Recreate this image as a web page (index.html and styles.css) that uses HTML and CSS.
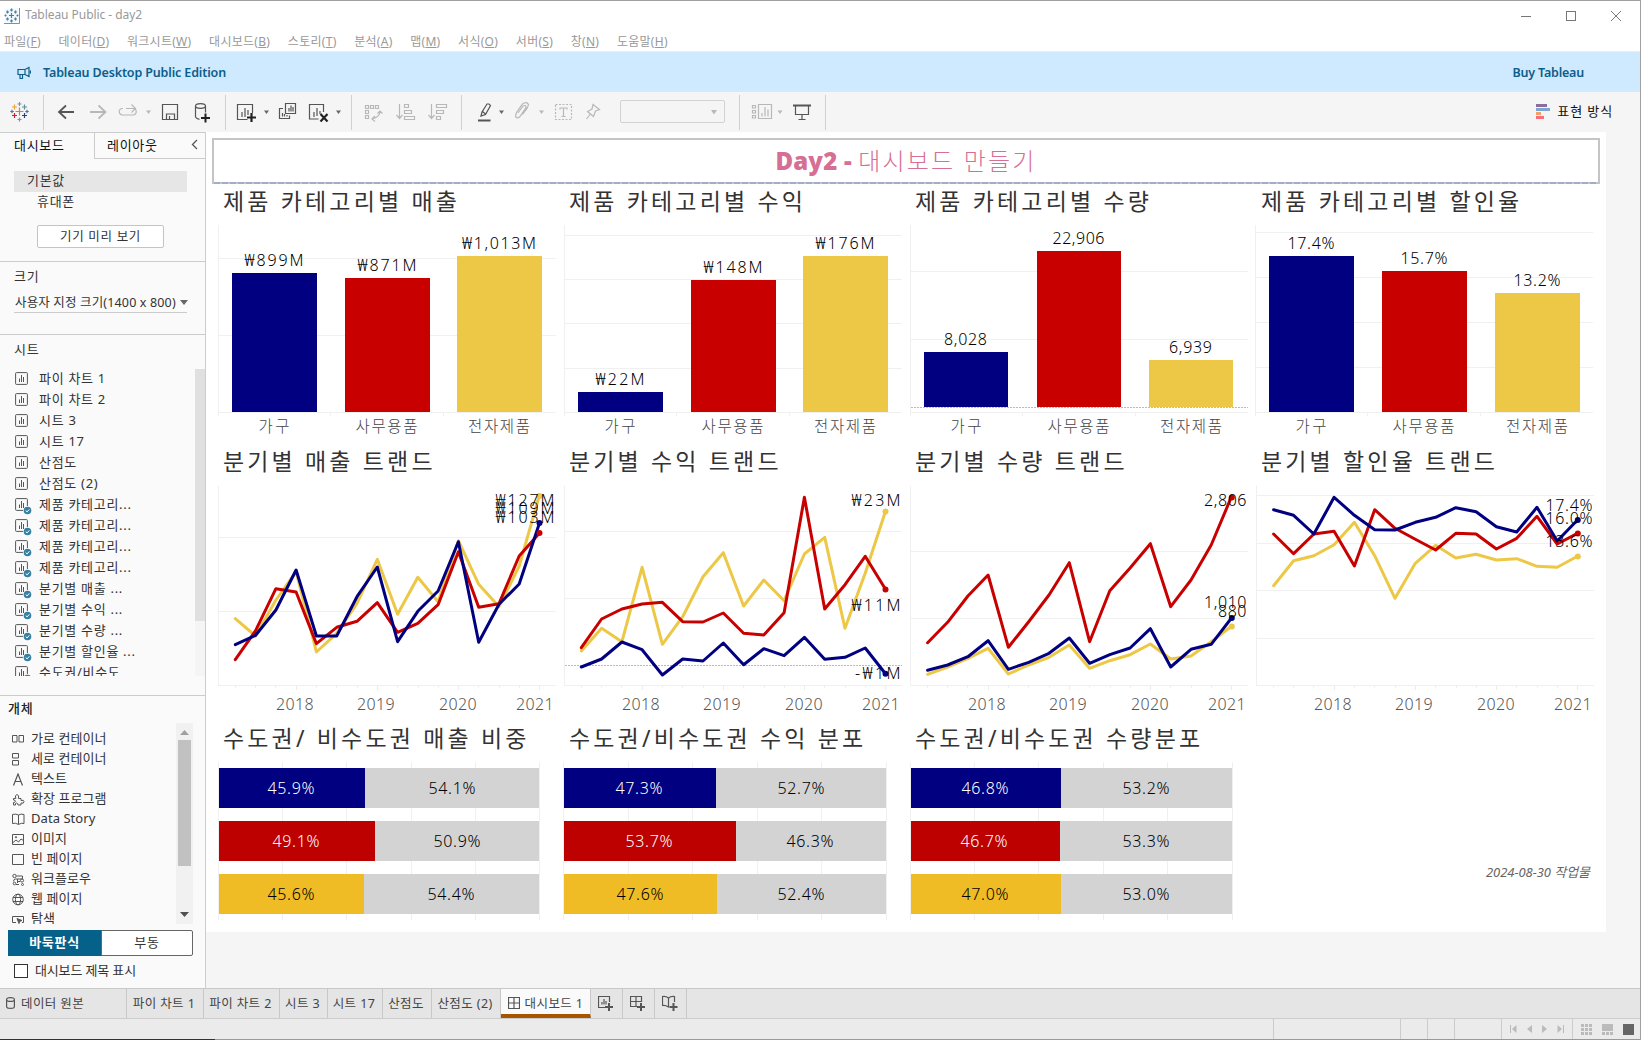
FILE: index.html
```html
<!DOCTYPE html>
<html lang="ko">
<head>
<meta charset="utf-8">
<title>Tableau Public - day2</title>
<link rel="stylesheet" href="styles.css">
</head>
<body>
<svg class="defs" width="0" height="0">
  <symbol id="sheet" viewBox="0 0 15 15"><rect x=".6" y=".6" width="11.8" height="11.8" rx=".8" fill="none" stroke="#555"/><path d="M4.5 6.5v3.5M6.5 3v7M8.5 5v5" stroke="#555" fill="none"/></symbol>
  <symbol id="used" viewBox="0 0 17 17"><path d="M12.4 8V1.4a.8.8 0 0 0-.8-.8H1.4a.8.8 0 0 0-.8.8v10.2a.8.8 0 0 0 .8.8H8" fill="none" stroke="#555"/><path d="M4.5 6.5v3.5M6.5 3v7M8.5 5v5" stroke="#555" fill="none"/><circle cx="12.5" cy="12.5" r="3.8" fill="#3580a3"/><path d="M10.7 12.5l1.4 1.4 2.3-2.6" stroke="#fff" fill="none"/></symbol>
  <symbol id="ticks" viewBox="0 0 346 10"><path d="M21.5 0v1.500M41.5 0v1.500M61.500 0v1.500M102.500 0v1.500M122.500 0v1.500M143.500 0v1.500M183.500 0v1.500M204.500 0v1.500M224.500 0v1.500M264.500 0v1.500M285.500 0v1.500M305.500 0v1.500M82.500 0v4M163.500 0v4M244.500 0v4M325.500 0v4" stroke="#ebebeb" fill="none"/></symbol>
</svg>
<div class="window">
  <header class="titlebar">
    <svg width="16" height="16" viewBox="0 0 16 16"><rect x=".5" y=".5" width="14" height="14" fill="#f3f7fa"/><path d="M7.500 5v5M5 7.500h5M7.500 .5v3M6 2h3M7.500 11.500v3M6 13h3M3.500 2.500v3M2 4h3M11.500 2.500v3M10 4h3M3.500 9.500v3M2 11h3M11.500 9.500v3M10 11h3M1.500 6.500v2M.5 7.500h2M13.500 6.500v2M12.500 7.500h2" stroke="#3d81ad" stroke-width="1.2"/><path d="M15.500 0v15.500H0" fill="none" stroke="#8c8c8c"/></svg>
    <span class="app-title">Tableau Public - day2</span>
    <div class="controls">
      <svg width="12" height="12" viewBox="0 0 12 12"><path d="M1 6.500h10"/></svg>
      <svg width="12" height="12" viewBox="0 0 12 12"><rect x="1.500" y="1.500" width="9" height="9"/></svg>
      <svg width="12" height="12" viewBox="0 0 12 12"><path d="M1 1l10 10M11 1L1 11"/></svg>
    </div>
  </header>
  <nav class="menu">
    <span>파일(<u>F</u>)</span><span>데이터(<u>D</u>)</span><span>워크시트(<u>W</u>)</span><span>대시보드(<u>B</u>)</span><span>스토리(<u>T</u>)</span><span>분석(<u>A</u>)</span><span>맵(<u>M</u>)</span><span>서식(<u>O</u>)</span><span>서버(<u>S</u>)</span><span>창(<u>N</u>)</span><span>도움말(<u>H</u>)</span>
  </nav>
  <div class="banner">
    <svg width="14" height="14" viewBox="0 0 14 14" fill="none" stroke="#0b5f8a" stroke-width="1.200"><path d="M1 3.500h7l4-2v9l-4-2H1zM8 3.500v5M3 8.500v4h2.500v-4M13.500 4.500v3"/></svg>
    <span>Tableau Desktop Public Edition</span>
    <a class="buy">Buy Tableau</a>
  </div>
  <div class="toolbar">
    <div class="group g1">
      <svg width="43" height="40" viewBox="0 92 43 40" fill="none"><path d="M19.500 107.500v8M15.500 111.500h8" stroke="#e8762c"/><path d="M14.500 104.500v5M12 107h5" stroke="#e8a33d"/><path d="M24.500 104.500v5M22 107h5" stroke="#5b8f99"/><path d="M14.500 113v5M12 115.500h5" stroke="#c72035"/><path d="M24.500 113v5M22 115.500h5" stroke="#1f457e"/><path d="M19.500 102v4M17.500 104h4M19.500 117.500v4M17.500 119.500h4" stroke="#7b92b5"/><path d="M12 109.800v3.500M10.300 111.500h3.500M27 109.800v3.500M25.300 111.500h3.500" stroke="#5f6b9a"/></svg>
    </div>
    <div class="group g2">
      <svg width="38" height="40" viewBox="44 92 38 40"><path d="M74 112H59M66 105.500L59 112l7 6.500" stroke-width="1.800"/></svg>
      <svg class="off" width="32" height="40" viewBox="82 92 32 40"><path d="M90 112h15.500M98.500 105.500l7 6.500-7 6.500" stroke-width="1.800"/></svg>
      <svg class="off" width="42" height="40" viewBox="114 92 42 40"><path d="M123 108.500h-.5a3.200 3.200 0 0 0 0 6.500h10.500a3.200 3.200 0 0 0 0-6.500H126M131.500 104.500l4 4-4 4"/><path class="fill" d="M146 110.500h5l-2.500 3.500z"/></svg>
      <svg width="30" height="40" viewBox="156 92 30 40"><path d="M162.500 104.500h15v15h-15zM166.500 119v-5h8v5M169.500 116v3"/></svg>
      <svg width="39" height="40" viewBox="186 92 39 40"><ellipse cx="200.500" cy="106" rx="5" ry="2.300"/><path d="M195.500 106v11q1 2 4 2.300M205.500 106v6.500"/><path d="M205.500 113.500v9M201 118h9" stroke="#222" stroke-width="2"/></svg>
    </div>
    <div class="group g3">
      <svg width="48" height="40" viewBox="226 92 48 40"><path d="M252.500 113v-8.500h-15v15h10M242 112v5M245 108v9M248 110v5"/><path d="M251.500 113v9M247 117.500h9" stroke="#222" stroke-width="2.200"/><path class="fill" d="M264 110.500h5l-2.500 3.500z"/></svg>
      <svg width="28" height="40" viewBox="274 92 28 40"><path d="M285.500 103.500h10v10h-10zM289 108v3.500M291 105.500v6M293 107v4.500M283 108.500h-3.500v10h10v-3M282.500 113v3.500M284.500 114v2.500M287 115v1.500"/></svg>
      <svg width="49" height="40" viewBox="302 92 49 40"><path d="M323.500 112v-7.500h-14v14.500h9M314 112v5M317 108v8M320 111v3"/><path d="M320.500 114l7 7.500M327.500 114l-7 7.500" stroke="#222" stroke-width="2.200"/><path class="fill" d="M336 110.500h5l-2.500 3.500z"/></svg>
    </div>
    <div class="group g4 off">
      <svg width="37" height="40" viewBox="352 92 37 40"><path d="M365.500 105.500h3v3h-3zM370.500 105.500h3v3h-3zM375.500 105.500h3v3h-3zM365.500 110.500h3v3h-3zM365.500 115.500h3v3h-3zM380 111q0 6-8 8M377.500 113.500l2.500-2.500 2.500 2.500M375 116l-3 3 3 2.500"/></svg>
      <svg width="32" height="40" viewBox="389 92 32 40"><path d="M399.500 104v14M396.500 115l3 3.500 3-3.500M404.500 104.500h4v3h-4zM404.500 110.500h7v3h-7zM404.500 116.500h10v3h-10z"/></svg>
      <svg width="40" height="40" viewBox="421 92 40 40"><path d="M431.500 104v14M428.500 115l3 3.500 3-3.500M436.500 104.500h10v3h-10zM436.500 110.500h7v3h-7zM436.500 116.500h4v3h-4z"/></svg>
    </div>
    <div class="group g5">
      <svg width="46" height="40" viewBox="462 92 46 40"><path d="M481 116l1-4 5-8h2l1.500 1.500-5 9-4.500 1.500zM482.500 111.500l3 2.500"/><path d="M478 120.500h12.500" stroke-width="2"/><path class="fill" d="M499 110.500h5l-2.500 3.500z"/></svg>
      <svg class="off" width="40" height="40" viewBox="508 92 40 40"><path d="M518 113l5-7q3-1.500 3 1.500l-6 9q-3.500 3-4.500-.5l1-3.500 6-8.500q4-3 6 .5-.5 3-3 6l-3 4"/><path class="fill" d="M539 110.500h5l-2.500 3.500z"/></svg>
      <svg class="off" width="31" height="40" viewBox="548 92 31 40"><rect x="555.500" y="104.500" width="16" height="15" stroke-dasharray="2 1.500"/><path d="M560 109.500v-1.500h7v1.500M563.500 108v8M561.500 116.500h4"/></svg>
      <svg class="off" width="41" height="40" viewBox="579 92 41 40"><path d="M593 104.500l6.500 5-4 1.500-2 5.500-6-5 4.500-2.500zM590.500 114l-4 5"/></svg>
      <span class="fit"><svg class="off" width="8" height="6" viewBox="0 0 8 6"><path class="fill" d="M1 1h6L4 5.500z"/></svg></span>
    </div>
    <div class="group g6">
      <svg class="off" width="45" height="40" viewBox="740 92 45 40"><path d="M752.500 105.500h3v2.500h-3zM752.500 110.500h3v2.500h-3zM752.500 115.500h3v2.500h-3zM758.500 104.500h13v14h-13zM762 113v3.500M765 107v9.500M768 109.500v7"/><path class="fill" d="M777.500 110.500h5l-2.500 3.500z"/></svg>
      <svg width="39" height="40" viewBox="785 92 39 40"><path d="M795.500 106v8.500h13V106M802 114.500v5M798.500 119.500h7"/><path d="M793 105.500h18" stroke-width="2"/></svg>
    </div>
    <div class="showme"><svg width="14" height="16" viewBox="0 0 14 16"><path fill="#8a6d9c" d="M0 0h11v3H0z"/><path fill="#7ea4d0" d="M0 4h14v3H0z"/><path fill="#f3a06b" d="M0 8h5v3H0z"/><path fill="#fa6e7a" d="M0 12h8v3H0z"/></svg><span>표현 방식</span></div>
  </div>
  <main class="main">
    <aside class="side">
      <div class="side-tabs"><span class="st-a">대시보드</span><span class="st-b">레이아웃<svg width="7" height="11" viewBox="0 0 7 11"><path d="M6 1L1.500 5.500 6 10" fill="none" stroke="#555" stroke-width="1.300"/></svg></span></div>
      <div class="devices">
        <div class="dev sel">기본값</div><div class="dev sub">휴대폰</div>
        <div class="preview">기기 미리 보기</div>
      </div>
      <div class="size"><h3>크기</h3><div class="select"><span>사용자 지정 크기(1400 x 800)</span><svg width="8" height="5" viewBox="0 0 8 5"><path d="M0 0h8L4 5z" fill="#666"/></svg></div></div>
      <div class="sheets"><h3>시트</h3>
        <div class="scroll">
          <ul>
            <li><svg><use href="#sheet" width="15" height="15"/></svg>파이 차트 1</li>
            <li><svg><use href="#sheet" width="15" height="15"/></svg>파이 차트 2</li>
            <li><svg><use href="#sheet" width="15" height="15"/></svg>시트 3</li>
            <li><svg><use href="#sheet" width="15" height="15"/></svg>시트 17</li>
            <li><svg><use href="#sheet" width="15" height="15"/></svg>산점도</li>
            <li><svg><use href="#sheet" width="15" height="15"/></svg>산점도 (2)</li>
            <li><svg><use href="#used" width="17" height="17"/></svg>제품 카테고리...</li>
            <li><svg><use href="#used" width="17" height="17"/></svg>제품 카테고리...</li>
            <li><svg><use href="#used" width="17" height="17"/></svg>제품 카테고리...</li>
            <li><svg><use href="#used" width="17" height="17"/></svg>제품 카테고리...</li>
            <li><svg><use href="#used" width="17" height="17"/></svg>분기별 매출 ...</li>
            <li><svg><use href="#used" width="17" height="17"/></svg>분기별 수익 ...</li>
            <li><svg><use href="#used" width="17" height="17"/></svg>분기별 수량 ...</li>
            <li><svg><use href="#used" width="17" height="17"/></svg>분기별 할인율 ...</li>
            <li><svg><use href="#used" width="17" height="17"/></svg>수도권/비수도</li>
          </ul>
          <div class="track"><div class="thumb"></div></div>
        </div>
      </div>
      <div class="objects"><h3>개체</h3>
        <div class="scroll">
          <ul>
            <li><svg viewBox="0 0 13 13"><path d="M.5 2.500h4.500v6.500H.5zM7 2.500h4.500v6.500H7z" /></svg>가로 컨테이너</li>
            <li><svg viewBox="0 0 13 13"><path d="M.5 .5h6v4.500h-6zM.5 7.500h6v4.500h-6z"/></svg>세로 컨테이너</li>
            <li><svg viewBox="0 0 13 13"><path d="M1.500 12.500L6 1l4.500 11.500M3 8.500h6" stroke-width="1.200"/></svg>텍스트</li>
            <li><svg viewBox="0 0 13 13"><path d="M1.500 5.500h2.300q-1.300-3.500 1.200-4 2.500.5 1.500 4h2.500v2q3-1 3 1.200t-3 1.300v2H6q0-2-1.500-2t-1 2h-2v-2.500q2 0 2-1.200t-2-1.300z"/></svg>확장 프로그램</li>
            <li><svg viewBox="0 0 13 13"><path d="M6.500 2Q4 .5 .5 1.500v9q3-1 6 1 3-2 5.500-1v-9Q9 .5 6.500 2v9"/></svg>Data Story</li>
            <li><svg viewBox="0 0 13 13"><path d="M.5 1.500h11v10H.5zM.5 10l3.500-3 2.500 2L9 6l2.500 1.500"/><circle cx="4" cy="4.200" r=".7"/></svg>이미지</li>
            <li><svg viewBox="0 0 13 13"><path d="M.5 1.500h11v10H.5z"/></svg>빈 페이지</li>
            <li><svg viewBox="0 0 13 13"><circle cx="2.500" cy="3" r="1.700"/><path d="M4.500 3h6v3h-7q-2 0-2 2.500M5 8.500h3M4 11.500h3M5.500 6v4"/><circle cx="10" cy="7.500" r="1.600"/><circle cx="2.500" cy="10.500" r="1.300"/><circle cx="10.500" cy="11.500" r="1"/></svg>워크플로우</li>
            <li><svg viewBox="0 0 13 13"><circle cx="6" cy="6.500" r="5.300"/><ellipse cx="6" cy="6.500" rx="2.600" ry="5.300"/><path d="M1 4.500h10M1 8.500h10"/></svg>웹 페이지</li>
            <li><svg viewBox="0 0 13 13"><path d="M4 9.500H.5v-6h11v6H10"/><path d="M5 5.500l5 2-2.200.8L7 10.500z" fill="#555"/></svg>탐색</li>
          </ul>
          <div class="track"><svg width="9" height="5" viewBox="0 0 9 5"><path d="M0 5h9L4.500 0z" fill="#a0a0a0"/></svg><div class="thumb"></div><svg width="9" height="5" viewBox="0 0 9 5"><path d="M0 0h9L4.500 5z" fill="#505050"/></svg></div>
        </div>
        <div class="toggle"><span class="on">바둑판식</span><span>부동</span></div>
        <label class="check"><i></i>대시보드 제목 표시</label>
      </div>
    </aside>
    <section class="canvas">
      <div class="dashboard">
        <h1><b>Day2 - </b>대시보드 만들기</h1>
        <div class="grid">
          <article><h2>제품 카테고리별 매출</h2>
            <svg viewBox="0 222 346 222" width="346" height="222">
              <path class="gl" d="M4 258.500h338M4 335.500h338M4.500 225v191M4 412.500h338M116.500 413v3M229.500 413v3"/>
              <path class="n" d="M18 273h85v139h-85z"/><path class="r" d="M131 278h85v134h-85z"/><path class="y" d="M243 256h85v156h-85z"/>
              <g class="val"><text x="60" y="266" textLength="59">₩899M</text><text x="173" y="271" textLength="59">₩871M</text><text x="285" y="249" textLength="74">₩1,013M</text></g>
              <g class="cat"><text x="60" y="432" textLength="31">가구</text><text x="172.500" y="432" textLength="62">사무용품</text><text x="285" y="432" textLength="62">전자제품</text></g>
            </svg></article>
          <article><h2>제품 카테고리별 수익</h2>
            <svg viewBox="0 222 346 222" width="346" height="222">
              <path class="gl" d="M4 235.500h338M4 279.500h338M4 323.500h338M4 368.500h338M4.500 225v191M4 412.500h338M116.500 413v3M229.500 413v3"/>
              <path class="n" d="M18 392h85v20h-85z"/><path class="r" d="M131 280h85v132h-85z"/><path class="y" d="M243 256h85v156h-85z"/>
              <g class="val"><text x="60" y="385" textLength="49">₩22M</text><text x="173" y="273" textLength="59">₩148M</text><text x="285" y="249" textLength="59">₩176M</text></g>
              <g class="cat"><text x="60" y="432" textLength="31">가구</text><text x="172.500" y="432" textLength="62">사무용품</text><text x="285" y="432" textLength="62">전자제품</text></g>
            </svg></article>
          <article><h2>제품 카테고리별 수량</h2>
            <svg viewBox="0 222 346 222" width="346" height="222">
              <path class="gl" d="M4 271.500h338M4 339.500h338M4.500 225v191M4 412.500h338M116.500 413v3M229.500 413v3"/><path class="zero" d="M5 407.500h337"/>
              <path class="n" d="M18 352h84v55h-84z"/><path class="r" d="M131 251h84v156h-84z"/><path class="y" d="M243 360h84v47h-84z"/>
              <g class="val"><text x="59.500" y="345" textLength="43">8,028</text><text x="172.500" y="244" textLength="52">22,906</text><text x="284.500" y="353" textLength="43">6,939</text></g>
              <g class="cat"><text x="60" y="432" textLength="31">가구</text><text x="172.500" y="432" textLength="62">사무용품</text><text x="285" y="432" textLength="62">전자제품</text></g>
            </svg></article>
          <article><h2>제품 카테고리별 할인율</h2>
            <svg viewBox="1 222 346 222" width="346" height="222">
              <path class="gl" d="M4 232.500h338M4 277.500h338M4 322.500h338M4 367.500h338M4.500 225v191M4 412.500h338M116.500 413v3M229.500 413v3"/>
              <path class="n" d="M18 256h85v156h-85z"/><path class="r" d="M131 271h85v141h-85z"/><path class="y" d="M244 293h85v119h-85z"/>
              <g class="val"><text x="60" y="249" textLength="47">17.4%</text><text x="173" y="264" textLength="47">15.7%</text><text x="286" y="286" textLength="47">13.2%</text></g>
              <g class="cat"><text x="60" y="432" textLength="31">가구</text><text x="172.500" y="432" textLength="62">사무용품</text><text x="286" y="432" textLength="62">전자제품</text></g>
            </svg></article>

          <article><h2>분기별 매출 트랜드</h2>
            <svg viewBox="0 482 346 239" width="346" height="239">
              <path class="gl" d="M4 537.500h338M4 611.500h338M4.500 486v200M4 685.500h338"/><use href="#ticks" y="686" width="346" height="10"/>
              <polyline class="ly" points="21.300,618.700 41.600,636 61.900,600 82.100,571.700 102.400,652 122.700,633.300 143,603.300 163.300,559.300 183.600,614.300 203.800,577.300 224.100,601.700 244.400,540.700 264.700,584.300 285,606.700 305.200,566 325.500,495"/>
              <polyline class="lr" points="21.300,659.700 41.600,630.700 61.900,588.700 82.100,592 102.400,643.700 122.700,627.300 143,621.300 163.300,602.700 183.600,632.300 203.800,623.300 224.100,604.700 244.400,551.700 264.700,607.300 285,603.700 305.200,556 325.500,533"/>
              <polyline class="ln" points="21.300,644.700 41.600,635.300 61.900,610 82.100,570 102.400,636 122.700,636 143,596.700 163.300,567 183.600,641.700 203.800,611.300 224.100,591 244.400,541.700 264.700,642.300 285,604.300 305.200,584 325.500,523"/>
              <circle class="y" cx="325.500" cy="496" r="3"/><circle class="r" cx="325.500" cy="533" r="3"/><circle class="n" cx="325.500" cy="523" r="3"/>
              <g class="end"><text x="281.500" y="506" textLength="59">₩127M</text><text x="281.500" y="514" textLength="59">₩109M</text><text x="281.500" y="523" textLength="59">₩103M</text></g>
              <g class="yr"><text x="81" y="710">2018</text><text x="162" y="710">2019</text><text x="244" y="710">2020</text><text x="321" y="710">2021</text></g>
            </svg></article>
          <article><h2>분기별 수익 트랜드</h2>
            <svg viewBox="0 482 346 239" width="346" height="239">
              <path class="gl" d="M4 531.500h338M4 598.500h338M4.500 486v200M4 685.500h338"/><path class="zero" d="M5 665.500h337"/><use href="#ticks" y="686" width="346" height="10"/>
              <polyline class="ly" points="21.300,651 41.600,628.300 61.900,641.700 82.100,567.300 102.400,644.300 122.700,616.700 143,576.700 163.300,552.700 183.600,606 203.800,580 224.100,600.700 244.400,554 264.700,537.300 285,628.300 305.200,573.300 325.500,511.300"/>
              <polyline class="lr" points="21.300,647.700 41.600,619 61.900,609 82.100,604 102.400,602.300 122.700,621.700 143,622 163.300,613 183.600,633.300 203.800,635 224.100,612.700 244.400,497.300 264.700,609 285,584.700 305.200,556.300 325.500,589.300"/>
              <polyline class="ln" points="21.300,667 41.600,659 61.900,642 82.100,649.700 102.400,675 122.700,659 143,661 163.300,643 183.600,664.700 203.800,648.700 224.100,655.700 244.400,637.300 264.700,659.300 285,657.300 305.200,648 325.500,673.700"/>
              <circle class="y" cx="325.500" cy="511.500" r="3"/><circle class="r" cx="325.500" cy="589.500" r="3"/><circle class="n" cx="325.500" cy="673.700" r="3"/>
              <g class="end"><text x="291.500" y="506" textLength="49">₩23M</text><text x="291.500" y="611" textLength="49">₩11M</text><text x="295" y="679" textLength="45.500">-₩1M</text></g>
              <g class="yr"><text x="81" y="710">2018</text><text x="162" y="710">2019</text><text x="244" y="710">2020</text><text x="321" y="710">2021</text></g>
            </svg></article>
          <article><h2>분기별 수량 트랜드</h2>
            <svg viewBox="0 482 346 239" width="346" height="239">
              <path class="gl" d="M4 551.500h338M4 618.500h338M4.500 486v200M4 685.500h338"/><use href="#ticks" y="686" width="346" height="10"/>
              <polyline class="ly" points="21.600,674.300 41.600,667 61.900,658.300 82.100,648.300 102.400,674 122.700,665 143,657.300 163.300,645 183.600,668.300 203.800,660.700 224.100,654.700 244.400,644 264.700,659 285,656 305.200,641.700 325.500,626.300"/>
              <polyline class="lr" points="21.600,642.700 41.600,622.300 61.900,596 82.100,575 102.400,647.300 122.700,621.700 143,595 163.300,562.700 183.600,641.700 203.800,590.700 224.100,568 244.400,543.700 264.700,606.700 285,580 305.200,545 325.500,496.700"/>
              <polyline class="ln" points="21.600,670.300 41.600,665 61.900,656.700 82.100,640.700 102.400,669.300 122.700,662.300 143,653.300 163.300,638 183.600,663.300 203.800,654.700 224.100,648 244.400,628.700 264.700,667 285,649.300 305.200,644.300 325.500,618"/>
              <circle class="y" cx="325.800" cy="626.500" r="3"/><circle class="r" cx="325.800" cy="497.500" r="3"/><circle class="n" cx="325.800" cy="618" r="3"/>
              <g class="end"><text x="298" y="506" textLength="42.500">2,806</text><text x="298" y="608" textLength="42.500">1,010</text><text x="312" y="617" textLength="28.500">880</text></g>
              <g class="yr"><text x="81" y="710">2018</text><text x="162" y="710">2019</text><text x="244" y="710">2020</text><text x="321" y="710">2021</text></g>
            </svg></article>
          <article><h2>분기별 할인율 트랜드</h2>
            <svg viewBox="0 482 346 239" width="346" height="239">
              <path class="gl" d="M4 495.500h338M4 543.500h338M4 590.500h338M4 638.500h338M4.500 486v200M4 685.500h338"/><use href="#ticks" y="686" width="346" height="10"/>
              <polyline class="ly" points="21.600,585.700 41.600,560.700 61.900,555.700 82.100,544.700 102.400,522.300 122.700,555.700 143,598.300 163.300,563.300 183.600,545.300 203.800,558 224.100,554.300 244.400,560 264.700,558.700 285,566.300 305.200,567.300 325.500,556.300"/>
              <polyline class="lr" points="21.600,534 41.600,553.700 61.900,534 82.100,531.300 102.400,566 122.700,509.700 143,528.300 163.300,539.300 183.600,550 203.800,533.300 224.100,534 244.400,549 264.700,538.300 285,516.300 305.200,544 325.500,533.300"/>
              <polyline class="ln" points="21.600,509.700 41.600,515.300 61.900,534 82.100,497.300 102.400,515.300 122.700,529.700 143,530 163.300,522.300 183.600,517.300 203.800,507.700 224.100,511.700 244.400,526.700 264.700,532 285,507.300 305.200,541 325.500,520"/>
              <circle class="y" cx="325.800" cy="556.500" r="3"/><circle class="r" cx="325.800" cy="533.500" r="3"/><circle class="n" cx="325.800" cy="520" r="3"/>
              <g class="end"><text x="293.500" y="511" textLength="47">17.4%</text><text x="293.500" y="524" textLength="47">16.0%</text><text x="293.500" y="547" textLength="47">13.6%</text></g>
              <g class="yr"><text x="81" y="710">2018</text><text x="162" y="710">2019</text><text x="244" y="710">2020</text><text x="321" y="710">2021</text></g>
            </svg></article>

          <article><h2>수도권/ 비수도권 매출 비중</h2>
            <svg viewBox="0 759 346 173" width="346" height="173">
              <path class="gl" d="M4.500 762v158M68.500 762v158M132.500 762v158M197.500 762v158M261.500 762v158M325.500 762v158"/>
              <path fill="#d3d3d3" d="M5 768h320v40H5zM5 821h320v40H5zM5 874h320v40H5z"/>
              <path class="n" d="M5 768h146v40H5z"/><path class="r2" d="M5 821h156v40H5z"/><path class="y2" d="M5 874h145v40H5z"/>
              <g class="val w"><text x="77" y="794" textLength="47">45.9%</text><text x="82" y="847" textLength="47">49.1%</text></g>
              <g class="val"><text x="77" y="900" textLength="47">45.6%</text><text x="238" y="794" textLength="47">54.1%</text><text x="243" y="847" textLength="47">50.9%</text><text x="237" y="900" textLength="47">54.4%</text></g>
            </svg></article>
          <article><h2>수도권/비수도권 수익 분포</h2>
            <svg viewBox="0 759 346 173" width="346" height="173">
              <path class="gl" d="M3.500 762v158M68.500 762v158M132.500 762v158M197.500 762v158M261.500 762v158M326.500 762v158"/>
              <path fill="#d3d3d3" d="M4 768h322v40H4zM4 821h322v40H4zM4 874h322v40H4z"/>
              <path class="n" d="M4 768h152v40H4z"/><path class="r2" d="M4 821h172v40H4z"/><path class="y2" d="M4 874h153v40H4z"/>
              <g class="val w"><text x="79" y="794" textLength="47">47.3%</text><text x="89" y="847" textLength="47">53.7%</text></g>
              <g class="val"><text x="80" y="900" textLength="47">47.6%</text><text x="241" y="794" textLength="47">52.7%</text><text x="250" y="847" textLength="47">46.3%</text><text x="241" y="900" textLength="47">52.4%</text></g>
            </svg></article>
          <article><h2>수도권/비수도권 수량분포</h2>
            <svg viewBox="0 759 346 173" width="346" height="173">
              <path class="gl" d="M4.500 762v158M68.500 762v158M132.500 762v158M197.500 762v158M261.500 762v158M326.500 762v158"/>
              <path fill="#d3d3d3" d="M5 768h321v40H5zM5 821h321v40H5zM5 874h321v40H5z"/>
              <path class="n" d="M5 768h150v40H5z"/><path class="r2" d="M5 821h149v40H5z"/><path class="y2" d="M5 874h150v40H5z"/>
              <g class="val w"><text x="79" y="794" textLength="47">46.8%</text><text x="78" y="847" textLength="47">46.7%</text></g>
              <g class="val"><text x="79" y="900" textLength="47">47.0%</text><text x="240" y="794" textLength="47">53.2%</text><text x="240" y="847" textLength="47">53.3%</text><text x="240" y="900" textLength="47">53.0%</text></g>
            </svg></article>
          <article class="note"><p>2024-08-30 작업물</p></article>
        </div>
      </div>
    </section>
  </main>
  <nav class="tabs">
    <span class="src"><svg width="9" height="12" viewBox="0 0 9 12"><path d="M.6 2.500v7Q.6 11.400 4.500 11.400T8.400 9.500v-7Q8.400.6 4.500.6T.6 2.500 4.500 4.400 8.400 2.500"/></svg>데이터 원본</span>
    <span>파이 차트 1</span><span>파이 차트 2</span><span>시트 3</span><span>시트 17</span><span>산점도</span><span>산점도 (2)</span>
    <span class="active"><svg width="12" height="12" viewBox="0 0 12 12"><path d="M.5 .5h11v11H.5zM6 .5v11M.5 6h11"/></svg>대시보드 1</span>
    <span><svg width="16" height="16" viewBox="0 0 16 16"><path d="M11.500 7V1.500H.5v11H7M4 7v2.500M6 4v5.500M8 6v3.500"/><path d="M11 8v8M7 12h8" stroke-width="2"/></svg></span>
    <span><svg width="16" height="16" viewBox="0 0 16 16"><path d="M11.500 7V1.500H.5v10H7M6 1.500v10M.5 6.500h11"/><path d="M11 8v8M7 12h8" stroke-width="2"/></svg></span>
    <span><svg width="16" height="16" viewBox="0 0 16 16"><path d="M12.500 7V1.500Q9 1 6.500 3 4 1 .5 1.500v9q3-.5 6 1.500V3"/><path d="M11.500 8v8M7.500 12h8" stroke-width="2"/></svg></span>
    <span class="rest"></span>
  </nav>
  <footer class="status">
    <span></span><span></span><span></span><span></span><span></span>
    <span class="nav"><svg width="7" height="8" viewBox="0 0 7 8"><path d="M0 0h1v8H0zM6.500 0v8L2 4z"/></svg><svg width="5" height="8" viewBox="0 0 5 8"><path d="M5 0v8L0 4z"/></svg><svg width="5" height="8" viewBox="0 0 5 8"><path d="M0 0v8l5-4z"/></svg><svg width="7" height="8" viewBox="0 0 7 8"><path d="M6 0h1v8H6zM.5 0v8L5 4z"/></svg></span>
    <span class="views"><svg width="11" height="11" viewBox="0 0 11 11"><path d="M0 0h3v3H0zM4 0h3v3H4zM8 0h3v3H8zM0 4h3v3H0zM4 4h3v3H4zM8 4h3v3H8zM0 8h3v3H0zM4 8h3v3H4zM8 8h3v3H8z"/></svg><svg width="11" height="11" viewBox="0 0 11 11"><path d="M0 0h11v7H0zM0 8h3v3H0zM4 8h3v3H4zM8 8h3v3H8z"/></svg><svg width="11" height="11" viewBox="0 0 11 11"><path fill="#666" d="M0 0h11v11H0z"/></svg></span>
  </footer>
  <div class="edge"></div>
</div>
</body>
</html>
```
FILE: styles.css
```css
* { box-sizing: border-box; }
body { margin: 0; font: 13px/1.2 "Noto Sans", "Noto Sans CJK KR", sans-serif; color: #333; background: #fff; }
svg { display: block; flex: none; }
.defs { position: absolute; }
h1, h2, h3, p, ul { margin: 0; padding: 0; font-weight: 400; list-style: none; }
.window { width: 1641px; height: 1040px; display: flex; flex-direction: column; border-top: 1px solid #a3a1a0; border-right: 1px solid #a0a0a0; overflow: hidden; }

.titlebar { height: 29px; flex: none; display: flex; align-items: center; padding: 0 18px 0 4px; color: #999; }
.app-title { margin-left: 5px; font-size: 12px; letter-spacing: -.05px; }
.controls { margin-left: auto; display: flex; gap: 33px; }
.controls path, .controls rect { fill: none; stroke: #777; }
.menu { height: 22px; flex: none; display: flex; align-items: center; gap: 17.700px; padding: 3px 0 0 4px; color: #999; font-size: 12px; letter-spacing: .27px; border-bottom: 1px solid #eee; }
.menu span { white-space: nowrap; }
.banner { height: 40px; flex: none; display: flex; align-items: center; padding: 1px 56px 0 17px; background: #cfe9ff; color: #0b5f8a; font-size: 12.500px; font-weight: 600; }
.banner span { margin-left: 12px; letter-spacing: -.14px; }
.buy { margin-left: auto; letter-spacing: -.2px; }

.toolbar { height: 40px; flex: none; display: flex; background: #f5f5f5; }
.group { display: flex; border-right: 1px solid #d0d0d0; height: 35px; margin-top: 3px; flex: none; }
.group svg { margin-top: -3px; fill: none; stroke: #555; stroke-width: 1.200; }
.g1 { width: 44px; } .g2 { width: 182px; } .g3 { width: 126px; } .g4 { width: 110px; } .g5 { width: 278px; } .g6 { width: 86px; }
.off svg, .group svg.off { stroke: #b8b8b8; }
.group .fill { fill: #666; stroke: none; }
.off .fill { fill: #b8b8b8; }
.fit { width: 105px; height: 23px; margin-top: 5px; border: 1px solid #d2d2d2; border-radius: 2px; display: flex; align-items: center; justify-content: flex-end; padding-right: 6px; }
.fit svg { margin: 0; }
.showme { margin-left: auto; padding-right: 27px; display: flex; align-items: center; gap: 7px; color: #111; font-size: 13px; letter-spacing: .9px; }

.main { height: 856px; flex: none; display: flex; }
.side { width: 206px; flex: none; display: flex; flex-direction: column; background: #fafafa; border-right: 1px solid #ccc; border-top: 1px solid #ccc; letter-spacing: .7px; }
.side-tabs { display: flex; height: 26px; flex: none; color: #111; line-height: 25px; }
.st-a { width: 94px; padding-left: 14px; }
.st-b { width: 111px; padding: 0 7px 0 12px; display: flex; justify-content: space-between; border-left: 1px solid #ccc; border-bottom: 1px solid #ccc; }
.st-b svg { margin-top: 6px; }
.devices { height: 103px; flex: none; padding: 12px 18px 0 14px; border-bottom: 1px solid #ccc; }
.dev { height: 21px; line-height: 19px; padding-left: 13px; }
.dev.sel { background: #e6e6e6; }
.dev.sub { padding-left: 23px; }
.preview { width: 127px; height: 23px; margin: 12px 0 0 23px; border: 1px solid #c4c4c4; border-radius: 2px; background: #fff; font-size: 12.500px; line-height: 21px; text-align: center; }
h3 { font-size: 13px; line-height: 18px; }
.size { height: 73px; flex: none; padding: 5px 18px 0 14px; border-bottom: 1px solid #ccc; }
.select { height: 21px; margin: 7px 0 0 0; padding: 0 0 0 1px; display: flex; justify-content: space-between; align-items: center; border-bottom: 1px solid #ccc; white-space: nowrap; font-size: 12.500px; letter-spacing: .15px; }
.select svg { margin-right: -1px; }
.sheets { height: 361px; flex: none; border-bottom: 1px solid #ccc; }
.sheets h3 { padding: 5px 0 0 14px; height: 34px; }
.scroll { display: flex; justify-content: space-between; overflow: hidden; }
.sheets .scroll { height: 307px; }
.sheets li { display: flex; height: 21px; line-height: 18px; padding-left: 15px; white-space: nowrap; }
.sheets li svg { width: 17px; height: 17px; margin: 3px 7px 0 0; }
.sheets .track { width: 10px; background: #f5f5f5; }
.sheets .thumb { height: 252px; background: #e0e0e0; }
.objects h3 { padding: 3px 0 0 8px; height: 27px; font-weight: 500; color: #222; }
.objects .scroll { height: 201px; padding-right: 12px; }
.objects ul { padding-top: 6px; }
.objects li { display: flex; align-items: center; gap: 6px; height: 20px; padding-left: 12px; white-space: nowrap; letter-spacing: .05px; }
.objects li svg { width: 13px; height: 13px; fill: none; stroke: #555; }
.objects .track { width: 17px; background: #f1f1f1; display: flex; flex-direction: column; align-items: center; padding: 7px 0; }
.objects .thumb { width: 13px; height: 126px; margin: 5px 0 auto; background: #c1c1c1; }
.toggle { display: flex; margin: 6px 12px 0 8px; height: 26px; line-height: 23px; text-align: center; background: #fff; border: 1px solid #666; border-radius: 2px; }
.toggle span { flex: 1; }
.toggle .on { flex: none; width: 94px; margin: -1px 0 -1px -1px; line-height: 25px; background: #06618a; color: #fff; font-weight: 700; border-right: 1px solid #666; }
.check { display: flex; align-items: center; height: 30px; padding: 0 0 0 14px; letter-spacing: -.15px; }
.check i { width: 14px; height: 14px; border: 1px solid #333; background: #fff; margin-right: 7px; }

.canvas { flex: 1; background: #f5f5f5; }
.dashboard { width: 1400px; height: 800px; background: #fff; padding: 6px 6px 0; }
h1 { width: 1388px; height: 46px; border: 2px solid #c4c4c4; border-bottom: 0; background: repeating-linear-gradient(90deg, #a0aecb 0 6px, #c4c4c4 6px 8px) bottom / 100% 2px no-repeat; color: #d66f94; text-align: center; font-size: 24px; font-weight: 300; line-height: 41px; letter-spacing: 2.200px; }
h1 b { font-weight: 900; letter-spacing: .2px; }
.grid { display: grid; grid-template: 260px 277px 211px / repeat(4, 346px); padding-left: 2px; }
h2 { height: 38px; padding-left: 9px; font-size: 23px; line-height: 34px; letter-spacing: 3.150px; white-space: nowrap; }
.gl { fill: none; stroke: #f0f0f0; }
.zero { fill: none; stroke: #bbb; stroke-dasharray: 2 1; }
.n { fill: #000080; } .r { fill: #c80000; } .y { fill: #ecc846; }
.r2 { fill: #bd0000; } .y2 { fill: #f0bc25; }
polyline { fill: none; stroke-width: 3; stroke-linejoin: round; stroke-linecap: round; }
.ln { stroke: #000080; } .lr { stroke: #c80000; } .ly { stroke: #ecc846; }
text { font-size: 16px; font-weight: 300; }
.val { fill: #000; text-anchor: middle; }
.val.w { fill: #fff; }
.end { fill: #000; }
.cat { fill: #444; text-anchor: middle; }
.cat text { font-size: 15.500px; }
.yr { fill: #555; text-anchor: middle; letter-spacing: .4px; }
.note { padding: 144px 8px 0 0; text-align: right; font-size: 13px; font-style: italic; color: #666; letter-spacing: -.05px; }

.tabs { height: 31px; flex: none; display: grid; grid-template-columns: 127px 77px 76px 48px 55px 49px 69px 90px 32px 32px 32px 1fr; background: #e5e5e5; border-top: 1px solid #c8c8c8; border-bottom: 1px solid #ccc; color: #444; letter-spacing: .4px; }
.tabs span { display: flex; align-items: center; justify-content: center; gap: 5px; border-right: 1px solid #c8c8c8; white-space: nowrap; padding: 0 2px 1px 0; font-size: 12.500px; }
.tabs svg { fill: none; stroke: #555; stroke-width: 1.200; }
.tabs .src { justify-content: flex-start; padding-left: 6px; gap: 6px; }
.tabs .rest { border: 0; }
.tabs .active { background: #fafafa; border-bottom: 4px solid #a85500; padding: 3px 0 0; }
.status { height: 20px; flex: none; display: grid; grid-template-columns: 1274px 127px 27px 27px 47px 71px 1fr; background: #ebebeb; }
.status span { border-right: 1px solid #ccc; }
.status .nav, .status .views { display: flex; align-items: center; justify-content: space-between; padding: 0 8px; }
.status .views { border: 0; padding: 0 6px 0 8px; }
.status path { fill: #bbb; }
.status .views path[fill] { fill: #666; }
.edge { height: 1px; flex: none; background: linear-gradient(90deg, #333 215px, #999 215px); }
```
